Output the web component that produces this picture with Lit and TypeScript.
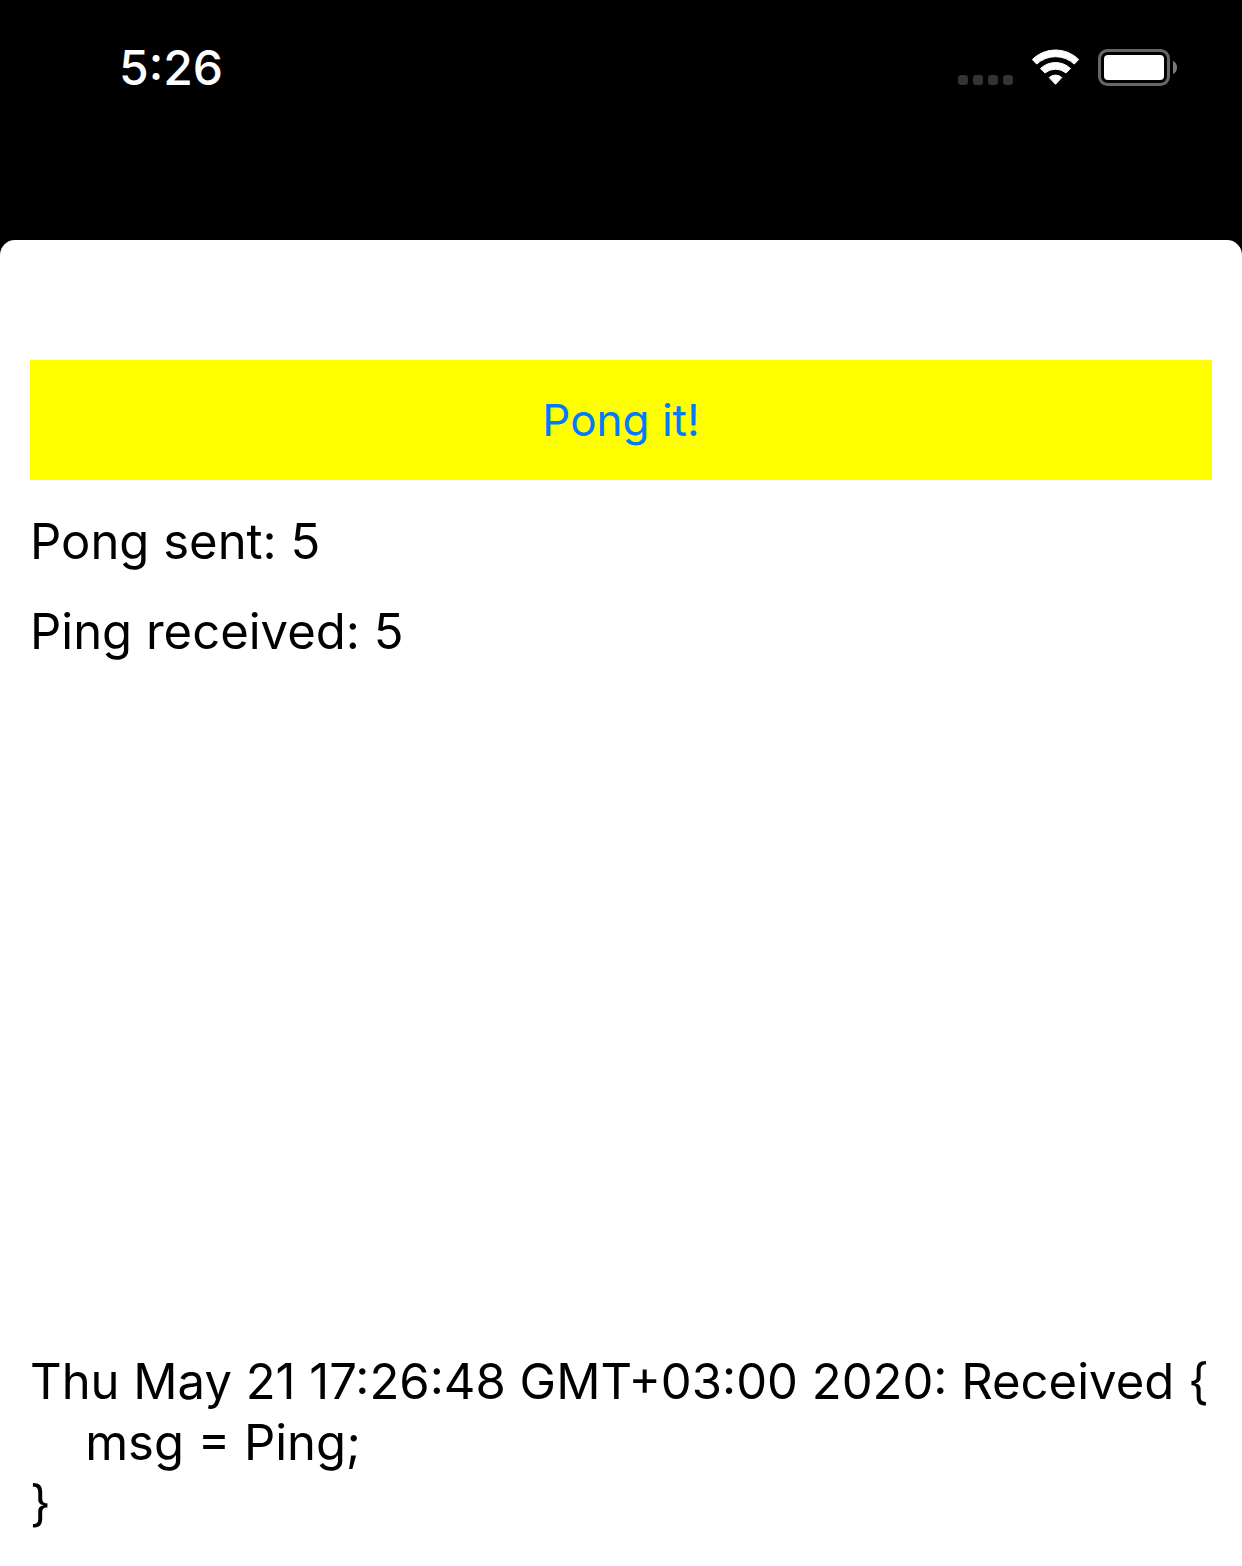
import { LitElement, html, css } from "lit";
import { customElement, state } from "lit/decorators.js";

@customElement("app-root")
export class AppRoot extends LitElement {
  @state() private sent = 5;
  @state() private received = 5;
  @state() private log = `Thu May 21 17:26:48 GMT+03:00 2020: Received {
    msg = Ping;
}`;

  static styles = css`
    :host {
      display: flex;
      flex-direction: column;
      min-height: 100vh;
      box-sizing: border-box;
      background: #000;
      font-family: Inter, "Liberation Sans", sans-serif;
    }
    .status {
      display: flex;
      justify-content: space-between;
      align-items: center;
      height: 240px;
      padding: 0 64px 104px 119px;
      box-sizing: border-box;
      color: #fff;
    }
    .time {
      font-size: 48px;
      line-height: 60px;
      font-weight: 500;
    }
    .indicators {
      display: flex;
      align-items: center;
      gap: 18px;
    }
    .indicators svg {
      display: block;
    }
    .sheet {
      flex: 1;
      display: flex;
      flex-direction: column;
      padding: 120px 30px 32px;
      background: #fff;
      border-radius: 15px 15px 0 0;
      color: #000;
      font-size: 49px;
      line-height: 61px;
    }
    .pong {
      height: 120px;
      border: 0;
      padding: 0;
      background: #ff0;
      color: #007aff;
      font: inherit;
      font-size: 44px;
      cursor: pointer;
    }
    .counters {
      display: flex;
      flex-direction: column;
      gap: 29px;
      padding-top: 31px;
    }
    .counters p {
      margin: 0;
    }
    .log {
      margin: auto 0 0;
      font: inherit;
      white-space: pre-wrap;
    }
  `;

  private pong() {
    this.sent += 1;
  }

  render() {
    return html`
      <header class="status">
        <time class="time">5:26</time>
        <div class="indicators">
          <svg width="56" height="38" viewBox="0 0 56 38" aria-hidden="true">
            <g fill="#333">
              <rect x="0" y="26" width="10" height="10" rx="3" />
              <rect x="15" y="26" width="10" height="10" rx="3" />
              <rect x="30" y="26" width="10" height="10" rx="3" />
              <rect x="45" y="26" width="10" height="10" rx="3" />
            </g>
          </svg>
          <svg width="48" height="38" viewBox="0 0 48 38" aria-hidden="true">
            <g fill="#fff" stroke="#fff" stroke-width="1" stroke-linejoin="round">
              <path d="M0.300 10.300A33 33 0 0 1 46.700 10.300L42.300 14.900A27.500 27.500 0 0 0 4.700 14.900Z" transform="translate(0 0.200)" />
              <path d="M8.500 19.600A21.500 21.500 0 0 1 38.500 19.600L34 24A16.300 16.300 0 0 0 13 24Z" />
              <path d="M17.200 28.600A9.200 9.200 0 0 1 29.800 28.600L23.500 35.300Z" />
            </g>
          </svg>
          <svg width="80" height="38" viewBox="0 0 80 38" aria-hidden="true">
            <rect x="1.500" y="1.500" width="69" height="34" rx="8" fill="none" stroke="#666" stroke-width="3" />
            <rect x="6" y="6" width="60" height="25" rx="4" fill="#fff" />
            <path d="M75 12C77.500 13 79 15.500 79 18.500S77.500 24 75 25Z" fill="#7a7a7a" />
          </svg>
        </div>
      </header>
      <main class="sheet">
        <button class="pong" @click=${this.pong}>Pong it!</button>
        <section class="counters">
          <p>Pong sent: ${this.sent}</p>
          <p>Ping received: ${this.received}</p>
        </section>
        <pre class="log">${this.log}</pre>
      </main>
    `;
  }
}
